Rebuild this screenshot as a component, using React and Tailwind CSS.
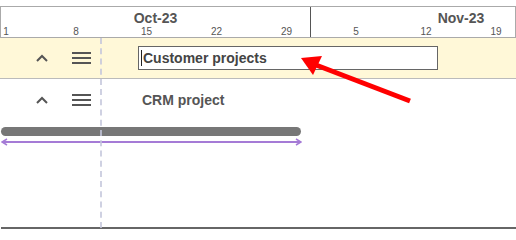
import React from "react";

const octDays = [1, 8, 15, 22, 29];
const novDays = [5, 12, 19];

function Caret() {
  return (
    <svg width="12" height="8" viewBox="0 0 12 8" className="text-[#555]">
      <path d="M1 7 L6 2 L11 7" fill="none" stroke="currentColor" strokeWidth="2" />
    </svg>
  );
}

function Burger() {
  return (
    <div className="flex w-[19px] flex-col gap-[3px]">
      <div className="h-[2px] bg-[#555]" />
      <div className="h-[2px] bg-[#555]" />
      <div className="h-[2px] bg-[#555]" />
    </div>
  );
}

function RowControls() {
  return (
    <div className="flex w-[138px] shrink-0 items-center">
      <div className="ml-[36px] flex w-[12px] justify-center">
        <Caret />
      </div>
      <div className="ml-[24px]">
        <Burger />
      </div>
    </div>
  );
}

export default function App() {
  return (
    <div
      className="relative h-[240px] w-[516px] overflow-hidden bg-white pt-[6px]"
      style={{ fontFamily: '"Liberation Sans", Arial, sans-serif' }}
    >
      {/* timeline header */}
      <div className="flex h-[32px] border-x border-t border-b border-[#aaa]">
        <div className="flex w-[310px] shrink-0 flex-col border-r border-[#555]">
          <div className="flex h-[20px] items-center justify-center pt-[2px] text-[14px] font-bold text-[#555]">Oct-23</div>
          <div className="flex h-[10px] items-end">
            {octDays.map((d, i) => (
              <div key={d} className={i < 4 ? "w-[70px] shrink-0" : "w-[30px] shrink-0"}>
                <div className="w-[10px] text-center text-[10px] leading-[10px] text-[#555]">{d}</div>
              </div>
            ))}
          </div>
        </div>
        <div className="flex flex-1 flex-col">
          <div className="flex h-[20px] w-[300px] items-center justify-center pt-[2px] text-[14px] font-bold text-[#555]">Nov-23</div>
          <div className="flex h-[10px] items-end pl-[40px]">
            {novDays.map((d) => (
              <div key={d} className="w-[70px] shrink-0">
                <div className="w-[10px] text-center text-[10px] leading-[10px] text-[#555] whitespace-nowrap flex justify-center">{d}</div>
              </div>
            ))}
          </div>
        </div>
      </div>

      {/* rows */}
      <div className="flex h-[41px] items-center border-b border-[#bbb] bg-[#fff8d8]">
        <RowControls />
        <div className="flex h-[24px] w-[300px] items-center border border-[#666] bg-white pl-[2px] text-[14px] font-bold text-[#444]">
          <span className="mr-[1px] h-[16px] w-[1px] bg-[#222]" />
          Customer projects
        </div>
      </div>
      <div className="flex h-[40px] items-center pt-[2px]">
        <RowControls />
        <div className="pl-[4px] text-[14px] font-bold text-[#555]">CRM project</div>
      </div>

      {/* task bar */}
      <div className="ml-[1px] mt-[8px] h-[9px] w-[300px] rounded-full bg-[#777]" />
      <div className="relative ml-[2px] mt-[5px] h-[2px] w-[299px] bg-[#a57bd6]">
        <svg width="8" height="8" viewBox="0 0 8 8" className="absolute left-[-1px] top-[-3px]">
          <path d="M6 1 L1 4 L6 7" fill="none" stroke="#a57bd6" strokeWidth="1.5" />
        </svg>
        <svg width="8" height="8" viewBox="0 0 8 8" className="absolute right-[-1px] top-[-3px]">
          <path d="M2 1 L7 4 L2 7" fill="none" stroke="#a57bd6" strokeWidth="1.5" />
        </svg>
      </div>

      <div className="ml-[1px] mt-[84px] h-[2px] bg-[#666]" />

      {/* today marker */}
      <div className="absolute left-[100px] top-[38px] h-[190px] border-l-2 border-dashed border-[#c4c6dc] opacity-80" />

      {/* annotation arrow */}
      <svg className="absolute left-0 top-0" width="516" height="240" viewBox="0 0 516 240">
        <line x1="410" y1="101" x2="316" y2="65" stroke="#f00" strokeWidth="5" />
        <polygon points="301,58 322,56 313,75" fill="#f00" />
      </svg>
    </div>
  );
}
